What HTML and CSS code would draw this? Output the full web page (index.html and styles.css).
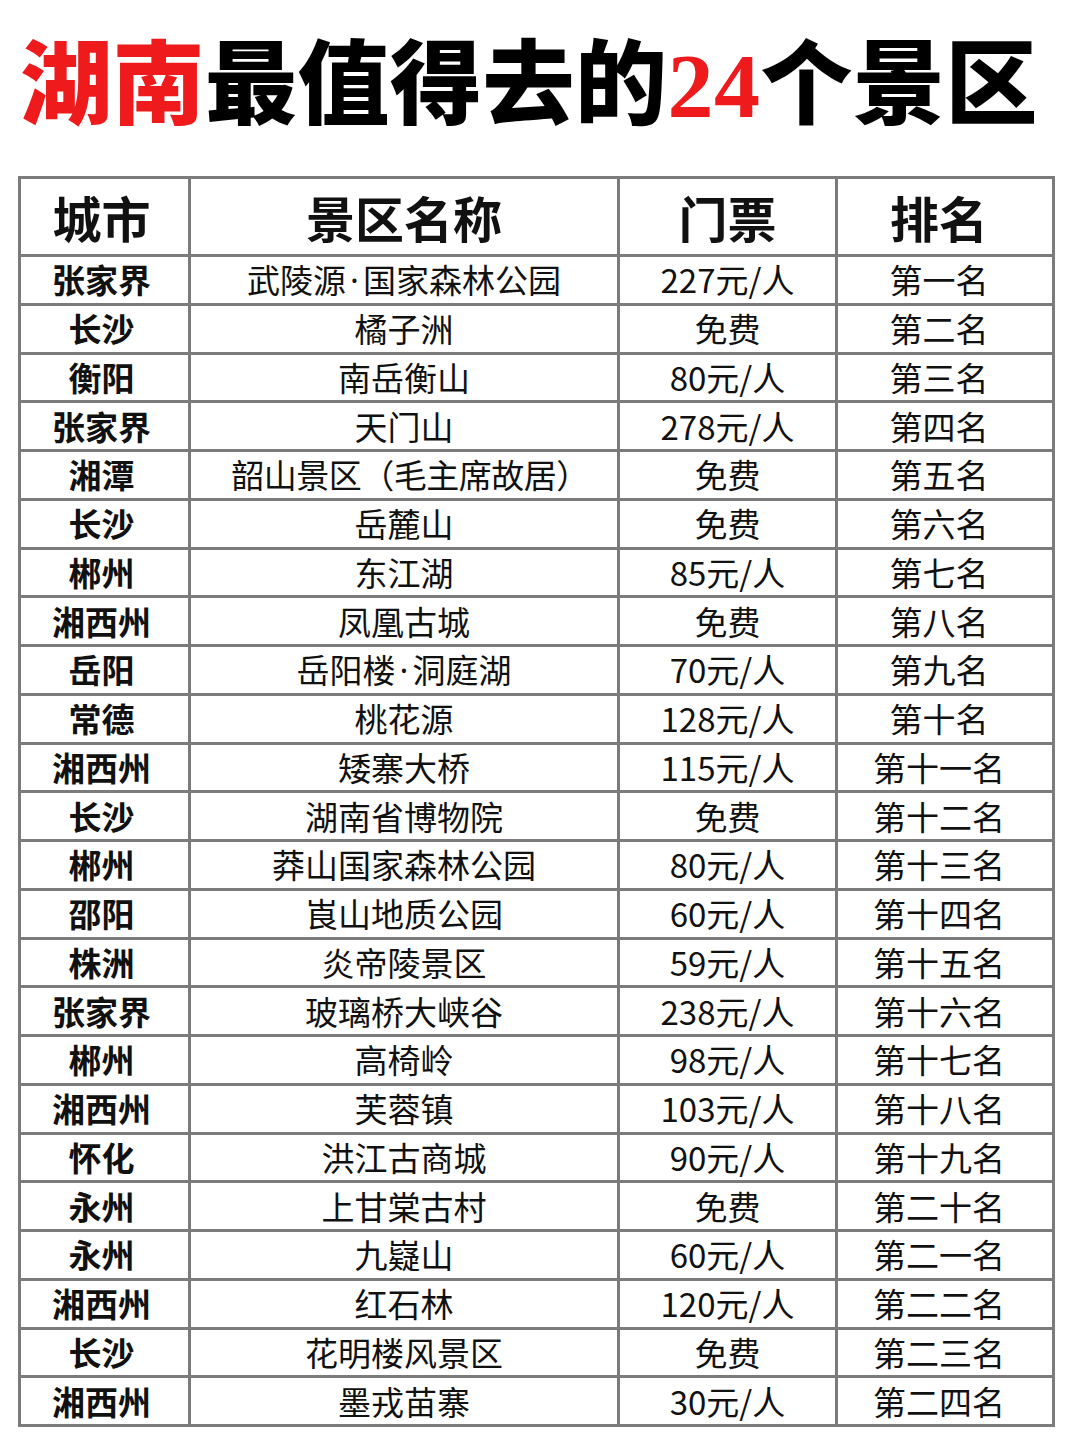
FILE: index.html
```html
<!DOCTYPE html>
<html lang="zh-CN">
<head>
<meta charset="utf-8">
<title>湖南最值得去的24个景区</title>
<link rel="stylesheet" href="styles.css">
</head>
<body>
<h1 class="title"><span class="red">湖南</span>最值得去的<span class="red num">24</span>个景区</h1>
<div class="table">
  <div class="cell head c1">城市</div><div class="cell head">景区名称</div><div class="cell head">门票</div><div class="cell head c4">排名</div>
  <div class="cell c1">张家界</div><div class="cell">武陵源<span class="dot">·</span>国家森林公园</div><div class="cell">227元/人</div><div class="cell c4">第一名</div>
  <div class="cell c1">长沙</div><div class="cell">橘子洲</div><div class="cell">免费</div><div class="cell c4">第二名</div>
  <div class="cell c1">衡阳</div><div class="cell">南岳衡山</div><div class="cell">80元/人</div><div class="cell c4">第三名</div>
  <div class="cell c1">张家界</div><div class="cell">天门山</div><div class="cell">278元/人</div><div class="cell c4">第四名</div>
  <div class="cell c1">湘潭</div><div class="cell shift">韶山景区（毛主席故居）</div><div class="cell">免费</div><div class="cell c4">第五名</div>
  <div class="cell c1">长沙</div><div class="cell">岳麓山</div><div class="cell">免费</div><div class="cell c4">第六名</div>
  <div class="cell c1">郴州</div><div class="cell">东江湖</div><div class="cell">85元/人</div><div class="cell c4">第七名</div>
  <div class="cell c1">湘西州</div><div class="cell">凤凰古城</div><div class="cell">免费</div><div class="cell c4">第八名</div>
  <div class="cell c1">岳阳</div><div class="cell">岳阳楼<span class="dot">·</span>洞庭湖</div><div class="cell">70元/人</div><div class="cell c4">第九名</div>
  <div class="cell c1">常德</div><div class="cell">桃花源</div><div class="cell">128元/人</div><div class="cell c4">第十名</div>
  <div class="cell c1">湘西州</div><div class="cell">矮寨大桥</div><div class="cell">115元/人</div><div class="cell c4">第十一名</div>
  <div class="cell c1">长沙</div><div class="cell">湖南省博物院</div><div class="cell">免费</div><div class="cell c4">第十二名</div>
  <div class="cell c1">郴州</div><div class="cell">莽山国家森林公园</div><div class="cell">80元/人</div><div class="cell c4">第十三名</div>
  <div class="cell c1">邵阳</div><div class="cell">崀山地质公园</div><div class="cell">60元/人</div><div class="cell c4">第十四名</div>
  <div class="cell c1">株洲</div><div class="cell">炎帝陵景区</div><div class="cell">59元/人</div><div class="cell c4">第十五名</div>
  <div class="cell c1">张家界</div><div class="cell">玻璃桥大峡谷</div><div class="cell">238元/人</div><div class="cell c4">第十六名</div>
  <div class="cell c1">郴州</div><div class="cell">高椅岭</div><div class="cell">98元/人</div><div class="cell c4">第十七名</div>
  <div class="cell c1">湘西州</div><div class="cell">芙蓉镇</div><div class="cell">103元/人</div><div class="cell c4">第十八名</div>
  <div class="cell c1">怀化</div><div class="cell">洪江古商城</div><div class="cell">90元/人</div><div class="cell c4">第十九名</div>
  <div class="cell c1">永州</div><div class="cell">上甘棠古村</div><div class="cell">免费</div><div class="cell c4">第二十名</div>
  <div class="cell c1">永州</div><div class="cell">九嶷山</div><div class="cell">60元/人</div><div class="cell c4">第二一名</div>
  <div class="cell c1">湘西州</div><div class="cell">红石林</div><div class="cell">120元/人</div><div class="cell c4">第二二名</div>
  <div class="cell c1">长沙</div><div class="cell">花明楼风景区</div><div class="cell">免费</div><div class="cell c4">第二三名</div>
  <div class="cell c1">湘西州</div><div class="cell">墨戎苗寨</div><div class="cell">30元/人</div><div class="cell c4">第二四名</div>
</div>
</body>
</html>
```

FILE: styles.css
```css
html, body {
  margin: 0;
  padding: 0;
  background: #ffffff;
}

body {
  font-family: "Noto Sans CJK SC", "Noto Sans", sans-serif;
  color: #111111;
}

.title {
  margin: 31px 0 0 20px;
  height: 145px;
  font-size: 92px;
  line-height: 92px;
  font-weight: 900;
  color: #000000;
  white-space: nowrap;
  letter-spacing: 0.5px;
}

.red {
  color: #ee1a1c;
}

.num {
  font-family: "Liberation Serif", "DejaVu Serif", serif;
  font-weight: 700;
}

.table {
  margin-left: 18px;
  width: 1034px;
  display: grid;
  grid-template-columns: 170px 429px 218px 217px;
  grid-template-rows: 78px repeat(24, 48.75px);
  border-left: 3px solid #7b7b7b;
  border-top: 3px solid #7b7b7b;
}

.cell {
  display: flex;
  align-items: center;
  justify-content: center;
  border-right: 3px solid #7b7b7b;
  border-bottom: 3px solid #7b7b7b;
  font-size: 33px;
  line-height: 1;
  color: #111111;
  white-space: nowrap;
}

.head {
  font-size: 49px;
  font-weight: 700;
}

.c1 {
  font-weight: 700;
  padding-right: 6px;
}

.c4 {
  padding-right: 12px;
}

.shift {
  padding-left: 12px;
  letter-spacing: -0.5px;
}

.dot {
  font-family: "Noto Sans", "DejaVu Sans", sans-serif;
  padding: 0 4px;
}
```
